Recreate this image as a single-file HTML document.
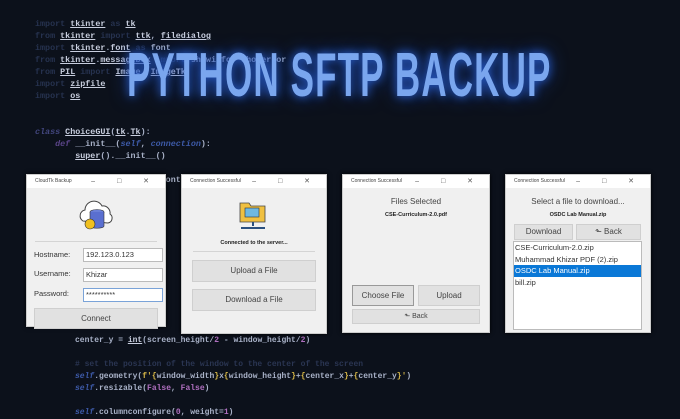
<!DOCTYPE html><html><head><style>
body{margin:0;width:680px;height:409px;overflow:hidden;background:#0c111b;font-family:"Liberation Sans",sans-serif;position:relative}
.code{position:absolute;font-family:"Liberation Mono",monospace;font-size:8.4px;font-weight:bold;white-space:pre;color:#a9b2c8}
.k{color:#26324f}.u{text-decoration:underline;color:#c8cede}.p{color:#b070c0}.y{color:#d8b848}.b{color:#3d5aa8;font-style:italic}.g{color:#2a3552}
.title{position:absolute;left:127px;top:40px;font-size:62px;font-weight:bold;color:#7aa6ee;letter-spacing:2px;transform:scaleX(0.565);transform-origin:left top;text-shadow:0 0 12px #2a60d0,0 0 24px #1a40a0;white-space:nowrap}
.win{position:absolute;background:#f0f0f0;border:1px solid #ccc;box-shadow:0 0 4px #000}
.tb{height:13px;background:#fff;font-size:5px;color:#444;line-height:13px;padding-left:8px;position:relative}
.tb span{position:absolute;right:6px;top:0;font-size:7px;letter-spacing:10px;color:#555}
.btn{position:absolute;background:#e1e1e1;border:1px solid #cfcfcf;font-size:8px;color:#444;text-align:center}
.lbl{position:absolute;font-size:7.5px;color:#333}
.inp{position:absolute;background:#fff;border:1px solid #bbb;font-size:7.5px;color:#333;height:12px;line-height:12px;padding-left:2px}
</style></head><body>
<div class="code" style="left:35px;top:18px;line-height:12px"><span class="k">import</span> <span class="u">tkinter</span> <span class="k">as</span> <span class="u">tk</span>
<span class="k">from</span> <span class="u">tkinter</span> <span class="k">import</span> <span class="u">ttk</span>, <span class="u">filedialog</span>
<span class="k">import</span> <span class="u">tkinter</span>.<span class="u">font</span> <span class="k">as</span> font
<span class="k">from</span> <span class="u">tkinter</span>.<span class="u">messagebox</span> <span class="k">import</span> showinfo, showerror
<span class="k">from</span> <span class="u">PIL</span> <span class="k">import</span> <span class="u">Image</span>, <span class="u">ImageTk</span>
<span class="k">import</span> <span class="u">zipfile</span>
<span class="k">import</span> <span class="u">os</span>


<span class="b" style="color:#42467e">class</span> <span class="u">ChoiceGUI</span>(<span class="u">tk</span>.<span class="u">Tk</span>):
    <span class="b" style="color:#5a4488">def</span> __init__(<span class="b">self</span>, <span class="b">connection</span>):
        <span class="u">super</span>().__init__()

        self.font = font.Font(<span style="color:#3a8a5a">'TkDefaultFont'</span>, size=<span class="p">16</span>)</div>
<div class="code" style="left:75px;top:335px;line-height:12px;font-size:8px">center_y = <span class="u">int</span>(screen_height/<span class="p">2</span> - window_height/<span class="p">2</span>)

<span class="g"># set the position of the window to the center of the screen</span>
<span class="b">self</span>.geometry(<span class="y">f'</span><span class="y">{</span>window_width<span class="y">}</span>x<span class="y">{</span>window_height<span class="y">}</span>+<span class="y">{</span>center_x<span class="y">}</span>+<span class="y">{</span>center_y<span class="y">}</span><span class="y">'</span>)
<span class="b">self</span>.resizable(<span class="p">False</span>, <span class="p">False</span>)

<span class="b">self</span>.columnconfigure(<span class="p">0</span>, weight=<span class="p">1</span>)</div>
<div class="title">PYTHON SFTP BACKUP</div>

<div class="win" style="left:26px;top:174px;width:138px;height:151px">
<div class="tb">CloudTk Backup<span>– □ ✕</span></div>
<svg style="position:absolute;left:50px;top:20px" width="38" height="38" viewBox="0 0 38 38"><path d="M6 26a6 6 0 0 1 2-11 9 9 0 0 1 17-4 7 7 0 0 1 8 8 5 5 0 0 1-2 9z" fill="#fff" stroke="#444" stroke-width="1"/><ellipse cx="20" cy="17" rx="7" ry="2.5" fill="#6a7fd8" stroke="#333" stroke-width=".6"/><path d="M13 17v14c0 3 14 3 14 0V17" fill="#5a6fd0" stroke="#333" stroke-width=".6"/><circle cx="13" cy="29" r="5" fill="#f0c020" stroke="#333" stroke-width=".6"/></svg>
<div style="position:absolute;left:8px;top:66px;width:122px;border-top:1px solid #d4d4d4"></div>
<div class="lbl" style="left:7px;top:75px">Hostname:</div><div class="inp" style="left:56px;top:73px;width:76px">192.123.0.123</div>
<div class="lbl" style="left:7px;top:94px">Username:</div><div class="inp" style="left:56px;top:93px;width:76px">Khizar</div>
<div class="lbl" style="left:7px;top:114px">Password:</div><div class="inp" style="left:56px;top:113px;width:76px;border-color:#7aa3d8">**********</div>
<div class="btn" style="left:7px;top:133px;width:122px;height:19px;line-height:19px">Connect</div>
</div>

<div class="win" style="left:181px;top:174px;width:144px;height:158px">
<div class="tb">Connection Successful<span>– □ ✕</span></div>
<svg style="position:absolute;left:56px;top:24px" width="30" height="32" viewBox="0 0 30 32"><path d="M2 4h9l2 3h14v16H2z" fill="#f0c040" stroke="#444" stroke-width=".8"/><rect x="7" y="9" width="14" height="9" fill="#6fb8e0" stroke="#333" stroke-width=".6"/><path d="M15 23v4M3 29h24" stroke="#2a5080" stroke-width="2"/></svg>
<div style="position:absolute;left:0;width:144px;top:65px;text-align:center;font-size:5.5px;font-weight:bold;color:#222">Connected to the server...</div>
<div style="position:absolute;left:11px;top:76px;width:122px;border-top:1px solid #d4d4d4"></div>
<div class="btn" style="left:10px;top:85px;width:122px;height:20px;line-height:20px">Upload a File</div>
<div class="btn" style="left:10px;top:114px;width:122px;height:20px;line-height:20px">Download a File</div>
</div>

<div class="win" style="left:342px;top:174px;width:146px;height:157px">
<div class="tb">Connection Successful<span>– □ ✕</span></div>
<div style="position:absolute;left:0;width:146px;top:22px;text-align:center;font-size:8px;color:#444">Files Selected</div>
<div style="position:absolute;left:0;width:146px;top:37px;text-align:center;font-size:5.5px;font-weight:bold;color:#222">CSE-Curriculum-2.0.pdf</div>
<div class="btn" style="left:9px;top:110px;width:60px;height:19px;line-height:19px;border-color:#999">Choose File</div>
<div class="btn" style="left:75px;top:110px;width:60px;height:19px;line-height:19px">Upload</div>
<div class="btn" style="left:9px;top:134px;width:126px;height:13px;line-height:13px;font-size:7px">⬑ Back</div>
</div>

<div class="win" style="left:505px;top:174px;width:144px;height:157px">
<div class="tb">Connection Successful<span>– □ ✕</span></div>
<div style="position:absolute;left:0;width:144px;top:22px;text-align:center;font-size:8px;color:#444">Select a file to download...</div>
<div style="position:absolute;left:0;width:144px;top:37px;text-align:center;font-size:5.5px;font-weight:bold;color:#222">OSDC Lab Manual.zip</div>
<div class="btn" style="left:8px;top:49px;width:57px;height:14px;line-height:14px">Download</div>
<div class="btn" style="left:70px;top:49px;width:63px;height:14px;line-height:14px">⬑ Back</div>
<div style="position:absolute;left:7px;top:66px;width:127px;height:87px;background:#fff;border:1px solid #bbb;font-size:7.5px;color:#333;line-height:11.5px">
<div style="padding-left:1px">CSE-Curriculum-2.0.zip</div><div style="padding-left:1px">Muhammad Khizar PDF (2).zip</div><div style="padding-left:1px;background:#0a78d7;color:#fff">OSDC Lab Manual.zip</div><div style="padding-left:1px">bill.zip</div></div>
</div>
</body></html>
